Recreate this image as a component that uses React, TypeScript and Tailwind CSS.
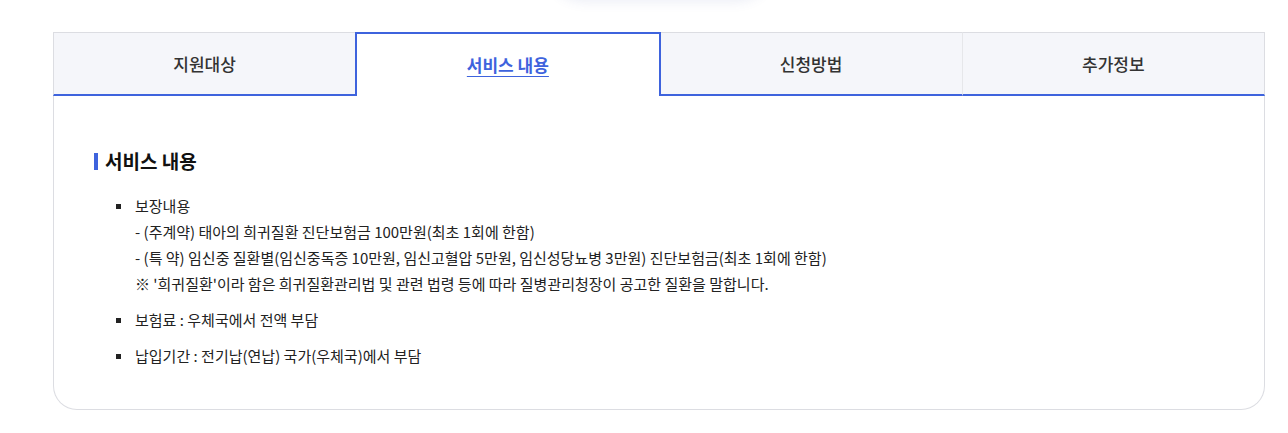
import { useState } from "react";

const tabs = ["지원대상", "서비스 내용", "신청방법", "추가정보"];

const items = [
  {
    title: "보장내용",
    lines: [
      "- (주계약) 태아의 희귀질환 진단보험금 100만원(최초 1회에 한함)",
      "- (특 약) 임신중 질환별(임신중독증 10만원, 임신고혈압 5만원, 임신성당뇨병 3만원) 진단보험금(최초 1회에 한함)",
      "※ '희귀질환'이라 함은 희귀질환관리법 및 관련 법령 등에 따라 질병관리청장이 공고한 질환을 말합니다.",
    ],
  },
  { title: "보험료 : 우체국에서 전액 부담", lines: [] },
  { title: "납입기간 : 전기납(연납) 국가(우체국)에서 부담", lines: [] },
];

function TabBar({ active, onSelect }: { active: number; onSelect: (i: number) => void }) {
  return (
    <div className="flex">
      {tabs.map((tab, i) => {
        const isActive = i === active;
        return (
          <button
            key={tab}
            onClick={() => onSelect(i)}
            className={
              isActive
                ? "flex-1 h-[64px] bg-white border-2 border-b-0 border-[#3e63dd] text-[17px] font-bold text-[#3e63dd] underline underline-offset-4"
                : "flex-1 h-[64px] bg-[#f5f6fa] border-t border-[#dcdde2] border-b-2 border-b-[#3e63dd] text-[17px] font-medium text-[#333] " +
                  (i === 0 ? "border-l " : "") +
                  (i === tabs.length - 1 ? "border-r " : "") +
                  (i === 2 ? "border-r border-r-[#e6e7ea] " : "")
            }
          >
            {tab}
          </button>
        );
      })}
    </div>
  );
}

export default function App() {
  const [active, setActive] = useState(1);

  return (
    <div
      className="w-[1288px] h-[433px] bg-white overflow-hidden"
      style={{ fontFamily: '"Noto Sans CJK KR", "Noto Sans", sans-serif' }}
    >
      {/* faint shadow of the element above */}
      <div className="h-[32px] overflow-hidden">
        <div className="ml-[545px] w-[230px] h-[40px] -mt-[40px] rounded-b-full shadow-[0_2px_12px_rgba(70,90,170,0.10)]" />
      </div>

      <div className="ml-[53px] w-[1212px]">
        <TabBar active={active} onSelect={setActive} />

        <div className="border-x border-b border-[#dcdde2] rounded-b-[24px] pl-[40px] pt-[52px] pb-[40px]">
          <h3 className="flex items-center gap-[7px] text-[19px] leading-[26px] font-bold text-[#111]">
            <span className="w-[4px] h-[17px] bg-[#3e63dd]" />
            서비스 내용
          </h3>

          <ul className="mt-[19px] flex flex-col gap-[10px]">
            {items.map((item) => (
              <li key={item.title} className="flex text-[15px] leading-[26px] text-[#222]">
                <span className="ml-[22px] mt-[11px] w-[5px] h-[5px] bg-[#222] shrink-0" />
                <div className="ml-[14px]">
                  <p>{item.title}</p>
                  {item.lines.map((line) => (
                    <p key={line}>{line}</p>
                  ))}
                </div>
              </li>
            ))}
          </ul>
        </div>
      </div>
    </div>
  );
}
